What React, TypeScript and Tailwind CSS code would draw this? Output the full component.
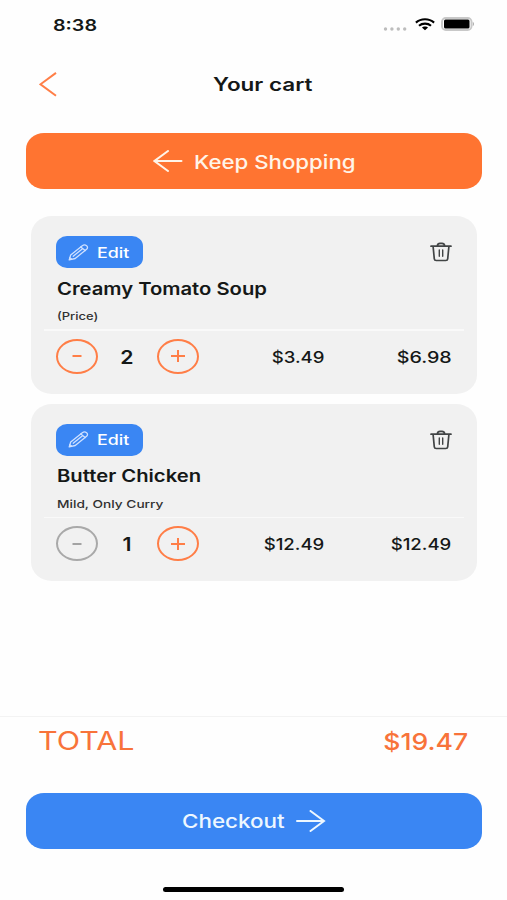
import type { ReactNode } from "react";
import clsx from "clsx";

type CartItem = {
  name: string;
  note: string;
  quantity: number;
  price: string;
  total: string;
  noteScale: string;
  totalScale: string;
};

const items: CartItem[] = [
  {
    name: "Creamy Tomato Soup",
    note: "(Price)",
    quantity: 2,
    price: "$3.49",
    total: "$6.98",
    noteScale: "scale-x-[1.18]",
    totalScale: "scale-x-[1.23]",
  },
  {
    name: "Butter Chicken",
    note: "Mild, Only Curry",
    quantity: 1,
    price: "$12.49",
    total: "$12.49",
    noteScale: "scale-x-[1.245]",
    totalScale: "scale-x-[1.16]",
  },
];

// Extended lettering: the installed face is stretched sideways
function Wide({ className, children }: { className?: string; children: ReactNode }) {
  return <span className={clsx("inline-block whitespace-nowrap", className)}>{children}</span>;
}

function StatusBar() {
  return (
    <div className="flex h-12 items-center pl-[53px] pr-[32px]">
      <Wide className="mt-px origin-left scale-x-[1.23] text-[16px] font-semibold leading-5">8:38</Wide>
      <svg className="ml-auto mt-[9px]" width="24" height="4" viewBox="0 0 24 4" fill="#bdbdbd">
        <circle cx="2.5" cy="2" r="1.7" />
        <circle cx="8.9" cy="2" r="1.7" />
        <circle cx="15.3" cy="2" r="1.7" />
        <circle cx="21.7" cy="2" r="1.7" />
      </svg>
      <svg className="ml-[8px]" width="20" height="13" viewBox="0 0 20 13" fill="none" stroke="#000" strokeWidth="2.1">
        <path d="M.9 4.6C5.9.1 14.1.1 19.1 4.6" />
        <path d="M4 7.8C7.3 4.9 12.7 4.9 16 7.8" />
        <path d="M10 8.4c-1.3 0-2.4.5-3.1 1.2L10 12.3l3.1-2.7c-.7-.7-1.8-1.2-3.1-1.2z" fill="#000" stroke="none" />
      </svg>
      <svg className="ml-[6px]" width="34" height="14" viewBox="0 0 34 14">
        <rect x="1" y="1" width="29.5" height="12" rx="3.8" fill="#fff" stroke="#c8c8c8" strokeWidth="1.9" />
        <rect x="3" y="2.6" width="25.5" height="8.8" rx="1.5" fill="#000" />
        <path d="M31.8 4.8c1.6.7 1.6 3.7 0 4.4z" fill="#aaa" />
      </svg>
    </div>
  );
}

function PencilIcon() {
  return (
    <svg width="21" height="17" viewBox="0 0 21 17" fill="none" stroke="#cfe1ff" strokeWidth="1.3" strokeLinejoin="round" strokeLinecap="round">
      <path d="M1.2 15.9l1.5-5L14.3 1.7c1.3-1 3.2-.9 4.3 0 1.2 1 1.2 2.5 0 3.5L7.2 14.5z" />
      <path d="M12.7 3l4.5 3.5M14.5 4.8L5.2 12.2M1.8 13.8l1.7 1.3" />
    </svg>
  );
}

function TrashIcon() {
  return (
    <svg width="22" height="20" viewBox="0 0 22 20" fill="none" stroke="#414445" strokeWidth="1.7" strokeLinecap="round" strokeLinejoin="round">
      <path d="M1 4.2h20M7.3 3.8C7.6 1.9 8.6 1.3 10 1.3h2c1.4 0 2.4.6 2.7 2.5M3.1 4.5l1.2 12.3c.1 1.1.8 1.7 1.9 1.7h9.6c1.1 0 1.8-.6 1.900-1.700l1.200-12.300" />
      <path d="M9.3 8v6.3M12.7 8v6.3" strokeWidth="1.4" />
    </svg>
  );
}

function StepButton({ plus, disabled }: { plus?: boolean; disabled?: boolean }) {
  return (
    <button
      className={clsx(
        "flex h-[35px] w-[42px] items-center justify-center rounded-[50%] border-2",
        disabled ? "border-[#a9a9a9] text-[#a3a3a3]" : "border-[#ff7e47] text-[#ff7e47]",
      )}
      aria-label={plus ? "Add one" : "Remove one"}
    >
      <svg width="14" height="12" viewBox="0 0 14 12" stroke="currentColor" strokeWidth="2">
        <path d={plus ? "M0 6h14M7 0v12" : "M2.5 6h9"} />
      </svg>
    </button>
  );
}

function CartCard({ item }: { item: CartItem }) {
  return (
    <div className="h-[177.5px] rounded-[21px/19px] bg-[#f1f1f1] pt-5">
      <div className="flex items-start justify-between px-[25px]">
        <button className="flex h-8 w-[87px] items-center rounded-[11px/10px] bg-[#3a86f3] pl-3 text-white">
          <PencilIcon />
          <Wide className="ml-[8px] mt-px origin-left scale-x-[1.23] text-[14.5px] font-medium leading-5">Edit</Wide>
        </button>
        <button className="mt-[6px]" aria-label="Delete">
          <TrashIcon />
        </button>
      </div>
      <div className="flex h-10 items-center pl-[25.5px] pt-[2px]">
        <Wide className="origin-left scale-x-[1.19] text-[17px] font-semibold">{item.name}</Wide>
      </div>
      <div className="flex h-[15px] items-center pl-[25.5px] pt-[1px] text-[#303030]">
        <Wide className={clsx("origin-left text-[11px] font-medium", item.noteScale)}>{item.note}</Wide>
      </div>
      <div className="mx-[13px] mt-[6px] h-[1.5px] bg-[#f9f9f9]" />
      <div className="mt-[8px] flex items-center px-[25px]">
        <StepButton disabled={item.quantity === 1} />
        <span className="w-[59px] pr-[2px] pt-[2px] text-center">
          <Wide className="scale-x-[1.15] text-[18.5px] font-semibold leading-6">{item.quantity}</Wide>
        </span>
        <StepButton plus />
        <span className="w-[125px] pt-[1px] text-right">
          <Wide className="origin-right scale-x-[1.16] text-[16px] font-medium leading-6">{item.price}</Wide>
        </span>
        <span className="flex-1 pr-[0.5px] pt-[1px] text-right">
          <Wide className={clsx("origin-right text-[16px] font-medium leading-6", item.totalScale)}>{item.total}</Wide>
        </span>
      </div>
    </div>
  );
}

export default function App() {
  return (
    <div className="flex h-[900px] w-[507px] flex-col overflow-hidden bg-[#fefefe] font-['Inter','Liberation_Sans',sans-serif] text-[#151817]">
      <StatusBar />

      {/* Header */}
      <header className="grid h-[85.4px] grid-cols-[60px_1fr_41px] items-start pt-6">
        <svg className="ml-[39px]" width="19" height="25" viewBox="0 0 19 25" fill="none" stroke="#ff7e47" strokeWidth="2">
          <path d="M17 .9L1.5 12.3L17 23.7" />
        </svg>
        <h1 className="pt-px text-center">
          <Wide className="scale-x-[1.25] text-[18px] font-semibold leading-6">Your cart</Wide>
        </h1>
      </header>

      <button className="ml-[26px] flex h-14 w-[456px] shrink-0 items-center rounded-[18px/16px] bg-[#ff7431] pl-[126.5px] text-[#fff4e8]">
        <svg width="30" height="22" viewBox="0 0 30 22" fill="none" stroke="currentColor" strokeWidth="2" strokeLinecap="round">
          <path d="M15 1L1.5 11L15 21M1.5 11H28.5" />
        </svg>
        <Wide className="ml-[11px] mt-[3px] origin-left scale-x-[1.17] text-[19px] font-medium">Keep Shopping</Wide>
      </button>

      {/* Items */}
      <main className="flex flex-1 flex-col gap-[10px] pl-[31px] pr-[30px] pt-[27px]">
        {items.map((item) => (
          <CartCard key={item.name} item={item} />
        ))}
      </main>

      <footer className="h-[184px] border-t border-[#f3f3f3]">
        <div className="flex h-[76px] items-start justify-between pl-[38px] pr-[38.5px] pt-2 text-[#f8733a]">
          <Wide className="origin-left scale-x-[1.22] text-[25px] leading-8">TOTAL</Wide>
          <Wide className="origin-right scale-x-[1.13] text-[23.5px] font-medium leading-[34px]">$19.47</Wide>
        </div>
        <button className="ml-[26px] flex h-14 w-[456px] items-center rounded-[18px/16px] bg-[#3a86f3] text-[#edf7ff]">
          <span className="w-[270px] pl-[155.5px] pt-[3px] text-left">
            <Wide className="origin-left scale-x-[1.18] text-[19px] font-medium">Checkout</Wide>
          </span>
          <svg width="30" height="22" viewBox="0 0 30 22" fill="none" stroke="currentColor" strokeWidth="2" strokeLinecap="round">
            <path d="M14.5 1L28 11L14.5 21M28 11H1" />
          </svg>
        </button>
        <div className="mx-auto mt-[38px] h-[5px] w-[181px] rounded-full bg-black" />
      </footer>
    </div>
  );
}
